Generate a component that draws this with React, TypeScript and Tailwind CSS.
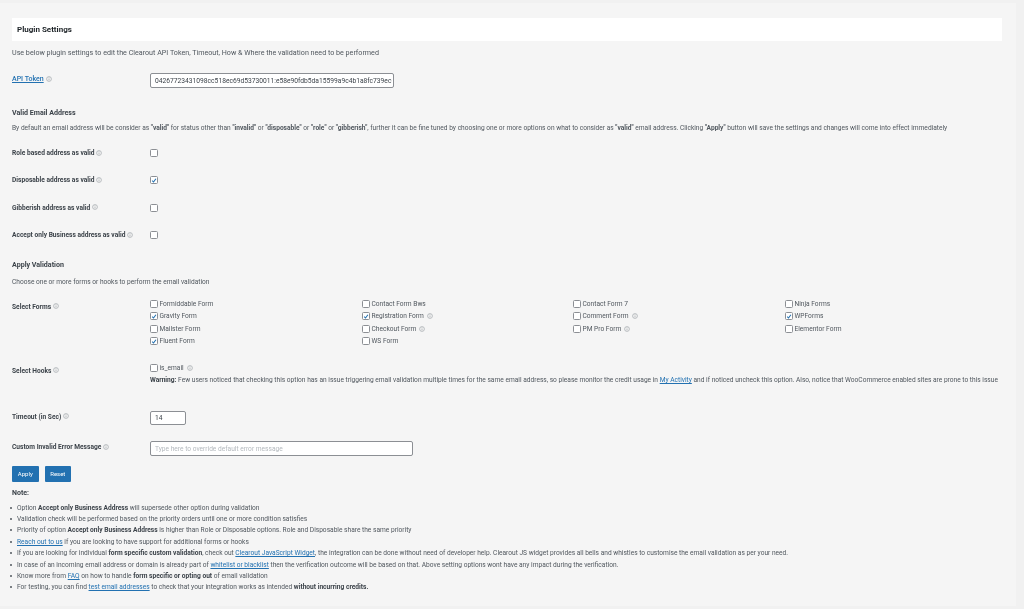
import type { ReactNode } from 'react';

const A = ({ children }: { children: ReactNode }) => (
  <a className="text-[#2271b1] underline">{children}</a>
);

const Info = () => (
  <svg viewBox="0 0 10 10" className="inline-block w-[6px] h-[6px] ml-[2px] align-[-0.5px]">
    <circle cx="5" cy="5" r="4" fill="none" stroke="#a3a9ad" strokeWidth="1.2" />
    <path d="M5 4.2v3M5 2.4v1" stroke="#a3a9ad" strokeWidth="1.2" />
  </svg>
);

const Check = ({ on }: { on?: boolean }) => (
  <span className="w-[8px] h-[8px] shrink-0 rounded-[1.5px] border border-[#8c8f94] bg-white flex items-center justify-center">
    {on && (
      <svg viewBox="0 0 10 10" className="w-[7px] h-[7px]">
        <path d="M2 5.2l2.2 2.3L8.2 2" fill="none" stroke="#2271b1" strokeWidth="1.8" />
      </svg>
    )}
  </span>
);

const forms: [string, boolean, boolean][] = [
  ['Formiddable Form', false, false],
  ['Contact Form Bws', false, false],
  ['Contact Form 7', false, false],
  ['Ninja Forms', false, false],
  ['Gravity Form', true, false],
  ['Registration Form', true, true],
  ['Comment Form', false, true],
  ['WPForms', true, false],
  ['Mailster Form', false, false],
  ['Checkout Form', false, true],
  ['PM Pro Form', false, true],
  ['Elementor Form', false, false],
  ['Fluent Form', true, false],
  ['WS Form', false, false],
];

const options: [string, boolean][] = [
  ['Role based address as valid', false],
  ['Disposable address as valid', true],
  ['Gibberish address as valid', false],
  ['Accept only Business address as valid', false],
];

const Label = ({ children }: { children: ReactNode }) => (
  <div className="w-[138px] shrink-0 font-bold text-[#3c434a]">{children}</div>
);

const Note = ({ children }: { children: ReactNode }) => (
  <li className="relative h-[11.4px] before:absolute before:left-[-7px] before:top-[4px] before:w-[2px] before:h-[2px] before:rounded-full before:bg-[#50575e]">
    {children}
  </li>
);

export default function App() {
  return (
    <div className="w-[1024px] h-[609px] overflow-hidden bg-[#f1f1f1] pt-[3px] text-[6.62px] leading-[10px] text-[#50575e] blur-[0.6px] font-['Roboto',sans-serif]">
      <div className="w-[1016px] h-[603px] bg-[#f5f5f5] pl-[12px] pr-[14px] pt-[15px]">
        <div className="h-[23px] bg-white pl-[5px] flex items-center font-bold text-[8px] text-[#1d2327]">
          Plugin Settings
        </div>

        <p className="mt-[7px] text-[7.15px]">
          Use below plugin settings to edit the Clearout API Token, Timeout, How &amp; Where the validation need to be performed
        </p>

        <div className="flex mt-[15px] h-[15px]">
          <div className="w-[138px] shrink-0 pt-[1px] font-medium text-[7px]">
            <A>API Token</A>
            <Info />
          </div>
          <div className="w-[244px] h-[15px] bg-white border border-[#8c8f94] rounded-[2px] pl-[4px] flex items-center whitespace-nowrap text-[#3c434a] text-[6.7px]">
            04267723431098cc518ec69d53730011:e58e90fdb5da15599a9c4b1a8fc739ec
          </div>
        </div>

        <h2 className="mt-[19.5px] font-bold text-[7.1px] text-[#3c434a]">Valid Email Address</h2>
        <p className="mt-[5.5px] whitespace-nowrap">
          By default an email address will be consider as <b>"valid"</b> for status other than <b>"invalid"</b> or <b>"disposable"</b> or <b>"role"</b> or <b>"gibberish"</b>, further it can be fine tuned by choosing one or more options on what to consider as <b>"valid"</b> email address. Clicking <b>"Apply"</b> button will save the settings and changes will come into effect immediately
        </p>

        <div className="mt-[15px] flex flex-col gap-[17.4px]">
          {options.map(([text, on]) => (
            <div key={text} className="flex items-center h-[10px]">
              <Label>
                {text}
                <Info />
              </Label>
              <Check on={on} />
            </div>
          ))}
        </div>

        <h2 className="mt-[20px] font-bold text-[7.1px] text-[#3c434a]">Apply Validation</h2>
        <p className="mt-[6.5px]">Choose one or more forms or hooks to perform the email validation</p>

        <div className="flex mt-[11px]">
          <div className="w-[138px] shrink-0 pt-[4px] font-bold text-[#3c434a]">
            Select Forms
            <Info />
          </div>
          <div className="grid grid-cols-[212px_211px_212px_auto] auto-rows-[12.4px]">
            {forms.map(([text, on, info]) => (
              <div key={text} className="flex items-center gap-[1px]">
                <Check on={on} />
                <span className="ml-[0.5px]">{text}</span>
                {info && <Info />}
              </div>
            ))}
          </div>
        </div>

        <div className="flex mt-[14.7px]">
          <div className="w-[138px] shrink-0 pt-[4px] font-bold text-[#3c434a]">
            Select Hooks
            <Info />
          </div>
          <div>
            <div className="flex items-center gap-[1px] h-[12px]">
              <Check />
              <span className="ml-[0.5px]">is_email</span>
              <Info />
            </div>
            <p className="whitespace-nowrap mt-[1px]">
              <b className="text-[#3c434a]">Warning:</b> Few users noticed that checking this option has an issue triggering email validation multiple times for the same email address, so please monitor the credit usage in <A>My Activity</A> and if noticed uncheck this option. Also, notice that WooCommerce enabled sites are prone to this issue
            </p>
          </div>
        </div>

        <div className="flex mt-[26px] h-[15px]">
          <Label>
            <span className="block pt-[1px]">
              Timeout (in Sec)
              <Info />
            </span>
          </Label>
          <div className="w-[36px] h-[14.5px] bg-white border border-[#8c8f94] rounded-[2px] pl-[4px] flex items-center text-[#3c434a]">
            14
          </div>
        </div>

        <div className="flex mt-[15.5px] h-[15px]">
          <Label>
            <span className="block pt-[1px]">
              Custom Invalid Error Message
              <Info />
            </span>
          </Label>
          <div className="w-[263px] h-[15px] bg-white border border-[#8c8f94] rounded-[2px] pl-[4px] flex items-center text-[#b4b9be]">
            Type here to override default error message
          </div>
        </div>

        <div className="flex gap-[6px] mt-[9.7px]">
          <button className="w-[26.5px] h-[15.5px] bg-[#2271b1] rounded-[1px] text-white text-[6px]">Apply</button>
          <button className="w-[26.5px] h-[15.5px] bg-[#2271b1] rounded-[1px] text-white text-[6px]">Reset</button>
        </div>

        <h3 className="mt-[6.5px] font-bold text-[7px] text-[#3c434a]">Note:</h3>
        <ul className="mt-[4.6px] pl-[5px] whitespace-nowrap [&_b]:text-[#3c434a]">
          <Note>Option <b>Accept only Business Address</b> will supersede other option during validation</Note>
          <Note>Validation check will be performed based on the priority orders until one or more condition satisfies</Note>
          <Note>Priority of option <b>Accept only Business Address</b> is higher than Role or Disposable options. Role and Disposable share the same priority</Note>
          <Note><A>Reach out to us</A> if you are looking to have support for additional forms or hooks</Note>
          <Note>If you are looking for individual <b>form specific custom validation</b>, check out <A>Clearout JavaScript Widget</A>, the integration can be done without need of developer help. Clearout JS widget provides all bells and whistles to customise the email validation as per your need.</Note>
          <Note>In case of an incoming email address or domain is already part of <A>whitelist or blacklist</A> then the verification outcome will be based on that. Above setting options wont have any impact during the verification.</Note>
          <Note>Know more from <A>FAQ</A> on how to handle <b>form specific or opting out</b> of email validation</Note>
          <Note>For testing, you can find <A>test email addresses</A> to check that your integration works as intended <b>without incurring credits.</b></Note>
        </ul>
      </div>
    </div>
  );
}
